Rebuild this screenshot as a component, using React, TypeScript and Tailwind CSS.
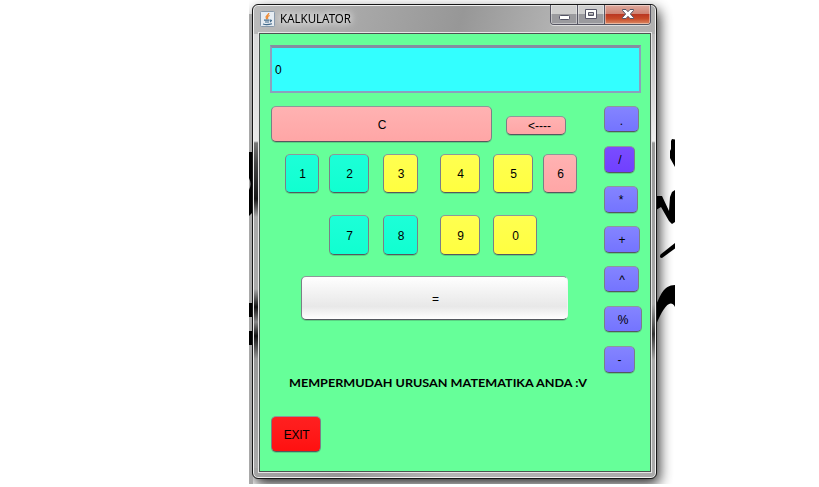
import React from "react";

type KeyProps = { label: string; size: string; tone: string; text?: string };

const tones = {
  pink: "bg-linear-to-b from-[#ffb2b2] to-[#ffa6a6]",
  teal: "bg-linear-to-b from-[#1cffd8] to-[#10ffd0]",
  yellow: "bg-linear-to-b from-[#ffff50] to-[#ffff40]",
  blue: "bg-linear-to-b from-[#8484ff] to-[#7474ff]",
  violet: "bg-linear-to-b from-[#7a4cff] to-[#7040ff]",
  red: "bg-linear-to-b from-[#ff2020] to-[#ff1010]",
};

function Key({ label, size, tone, text = "pt-px pl-px" }: KeyProps) {
  return (
    <button
      className={`flex shrink-0 items-center justify-center rounded-[5px] border border-t-[#8f9799] border-r-[#7b7f86] border-b-[#55585f] border-l-[#7b7f86] shadow-[0_1px_0_rgba(60,110,80,0.3)] ${size} ${tone}`}
    >
      <span className={`leading-[14px] whitespace-nowrap ${text}`}>{label}</span>
    </button>
  );
}

function Backdrop() {
  return (
    <svg className="absolute inset-0" width="426" height="484" viewBox="0 0 426 484">
      <defs>
        <filter id="soft" x="-20%" y="-20%" width="140%" height="140%">
          <feGaussianBlur stdDeviation="7" />
        </filter>
      </defs>
      <rect x="6" y="10" width="404" height="474" rx="5" fill="#000" opacity="0.85" filter="url(#soft)" />
      <rect x="0" y="14" width="4" height="470" fill="#a8a8a8" />
      <path d="M0 152H4V212L0 216V190Q3 184 0 178ZM0 303H4V317H0ZM0 331H4V345H0Z" fill="#000" />
      <path d="M426 139.5L423 139L422 141V149L421 151V158L426 167Z" />
      <path d="M407 196H413L420 211L421 197L423 192L426 190V222L423 224L420 221L412 207L407 210Z" />
      <path d="M426 243L411.5 254.5Q410 258 413 258L426 248.5Z" />
      <path d="M407 305C411 297 414 285 426 285V307C421 298 414 308 407 325Z" />
    </svg>
  );
}

function JavaIcon() {
  return (
    <svg width="15" height="16" viewBox="0 0 15 16" fill="none">
      <rect x=".5" y=".5" width="14" height="15" rx="1" fill="#e6ecf2" stroke="#8798aa" />
      <path d="M8.8 2C9 4 5 5 6.2 7L7.2 8.4M9.7 4.5C7 5.5 7.2 6.2 8 7.6" stroke="#ed8a35" strokeWidth="1.3" />
      <path d="M4 9.2H9.5M5 11H9M3 13Q7 14.2 12 12.7M10 9.2Q13 9 10 11" stroke="#426a8b" strokeWidth="1.2" />
    </svg>
  );
}

function Caption() {
  return (
    <div className="flex h-5 w-[101px] overflow-hidden rounded-b-[4px] border border-t-0 border-[#555562] shadow-[0_1px_0_#ddd]">
      <div className="flex w-[27px] shrink-0 justify-center border-r border-[#555562] bg-linear-to-b from-[#cecece] from-50% to-[#9a9a9e] to-50% shadow-[inset_0_0_0_1px_#ffffff66]">
        <svg width="26" height="19"><rect x="8.5" y="10.5" width="10" height="4" rx="1" fill="#fff" stroke="#555566" /></svg>
      </div>
      <div className="flex w-[27px] shrink-0 justify-center border-r border-[#555562] bg-linear-to-b from-[#cecece] from-50% to-[#9a9a9e] to-50% shadow-[inset_0_0_0_1px_#ffffff66]">
        <svg width="26" height="19"><path d="M7.5 4.5H18.5V13.5H7.5ZM10.5 7.5V10.5H15.5V7.5Z" fill="#fff" fillRule="evenodd" stroke="#555566" /></svg>
      </div>
      <div className="flex flex-1 justify-center bg-[linear-gradient(#dfaa9e_0%,#cf8474_45%,#b83420_46%,#c84a28_72%,#dc8b65_100%)] shadow-[inset_0_0_0_1px_#ffffff66]">
        <svg width="45" height="19"><path d="M17.5 4.5H21L23 6.7L25 4.5H28.5V5.5L25.4 9L28.5 12.5V13.5H25L23 11.3L21 13.5H17.5V12.5L20.6 9L17.5 5.5Z" fill="#fff" stroke="#555566" /></svg>
      </div>
    </div>
  );
}

export default function App() {
  return (
    <main className="h-[487px] w-[819px] overflow-hidden bg-white font-['Liberation_Sans',Arial,sans-serif] text-[12px] text-black">
      <div className="relative ml-[249px] h-[484px] w-[426px] overflow-hidden">
        <Backdrop />
        <section className="relative mt-1 ml-[3px] h-[475px] w-[405px] rounded-[6px] border border-[#161616] bg-[linear-gradient(105deg,#bbb_0%,#aaa_18%,#979797_40%,#b5b5b5_60%,#aaa_100%)] shadow-[inset_0_0_0_1px_#f0f0f0]">
          <div className="absolute top-[29px] left-px h-[434px] w-[5px] bg-[linear-gradient(#d9d9d9_0px,#e8e8e8_107px,#777_109px,#444_130px,#151515_165px,#aaa_183px,#aaa_255px,#111_273px,#888_288px,#111_302px,#999_325px,#aaa_434px)]" />
          <div className="absolute top-[29px] right-px h-[434px] w-[4px] bg-[linear-gradient(#bbb_0px,#eee_107px,#999_109px,#aaa_270px,#333_300px,#aaa_326px,#aaa_434px)]" />
          <header className="flex h-[28px] justify-between pr-[5px] pl-[7px]">
            <div className="flex items-center gap-[5px]">
              <JavaIcon />
              <h1 className="origin-left scale-x-[0.96] font-['Noto_Sans',sans-serif] text-[12px] leading-none [text-shadow:0_0_6px_#fff,0_0_10px_#fff]">KALKULATOR</h1>
            </div>
            <Caption />
          </header>
          <div className="relative ml-[6px] h-[439px] w-[392px] border border-[#4b5350] bg-[#66ff99] pt-[11px] pl-[10px] shadow-[0_0_0_1px_#e5e5e5]">
            <div className="flex h-[48px] w-[371px] items-center border-2 border-t-[3px] border-[#8ba1bd] border-t-[#858da2] bg-[#33ffff] pl-[3px]">0</div>
            <div className="mt-[13px] flex">
              <div className="w-[334px] pl-px">
                <div className="flex items-start gap-[14px]">
                  <Key label="C" size="h-[36px] w-[221px]" tone={tones.pink} text="pt-[2px] pl-px" />
                  <Key label="<----" size="mt-[10px] h-[19px] w-[60px]" tone={tones.pink} text="pl-[7px]" />
                </div>
                <div className="mt-[12px] ml-[14px] flex">
                  <Key label="1" size="mr-[10px] h-[39px] w-[34px]" tone={tones.teal} />
                  <Key label="2" size="mr-[14px] h-[39px] w-[40px]" tone={tones.teal} />
                  <Key label="3" size="mr-[22px] h-[39px] w-[35px]" tone={tones.yellow} />
                  <Key label="4" size="mr-[13px] h-[39px] w-[40px]" tone={tones.yellow} />
                  <Key label="5" size="mr-[10px] h-[39px] w-[40px]" tone={tones.yellow} />
                  <Key label="6" size="h-[39px] w-[34px]" tone={tones.pink} />
                </div>
                <div className="mt-[22px] ml-[58px] flex">
                  <Key label="7" size="mr-[14px] h-[40px] w-[40px]" tone={tones.teal} text="pt-[2px] pl-px" />
                  <Key label="8" size="mr-[22px] h-[40px] w-[35px]" tone={tones.teal} text="pt-[2px] pl-px" />
                  <Key label="9" size="mr-[13px] h-[40px] w-[40px]" tone={tones.yellow} text="pt-[2px] pl-px" />
                  <Key label="0" size="h-[40px] w-[44px]" tone={tones.yellow} text="pt-[2px] pl-px" />
                </div>
                <Key label="=" size="mt-[21px] ml-[30px] h-[44px] w-[267px] border-r-[#f2f2f2]" tone="bg-[linear-gradient(#fff_0%,#f3f3f3_35%,#e8e8e8_70%,#fff_100%)]" text="pt-[2px] pl-[2px]" />
                <p className="mt-[57px] ml-[18px] h-[12px] w-[298px]">
                  <svg width="302" height="12" className="overflow-visible">
                    <text x="0" y="10" textLength="298" lengthAdjust="spacingAndGlyphs" className="font-[Lato,sans-serif] text-[11px] font-bold">MEMPERMUDAH URUSAN MATEMATIKA ANDA :V</text>
                  </svg>
                </p>
                <Key label="EXIT" size="mt-[27px] h-[36px] w-[50px]" tone={tones.red} text="pt-[2px] pl-px tracking-[-0.3px]" />
              </div>
              <div className="flex flex-col items-start">
                <Key label="." size="mb-[14px] h-[26px] w-[35px]" tone={tones.blue} text="pt-[3px]" />
                <Key label="/" size="mb-[13px] h-[27px] w-[31px]" tone={tones.violet} />
                <Key label="*" size="mb-[13px] h-[27px] w-[34px]" tone={tones.blue} text="" />
                <Key label="+" size="mb-[13px] h-[27px] w-[36px]" tone={tones.blue} text="" />
                <Key label="^" size="mb-[14px] h-[26px] w-[35px]" tone={tones.blue} />
                <Key label="%" size="mb-[14px] h-[26px] w-[38px]" tone={tones.blue} text="pt-[2px]" />
                <Key label="-" size="h-[27px] w-[31px]" tone={tones.blue} text="" />
              </div>
            </div>
          </div>
        </section>
      </div>
    </main>
  );
}
